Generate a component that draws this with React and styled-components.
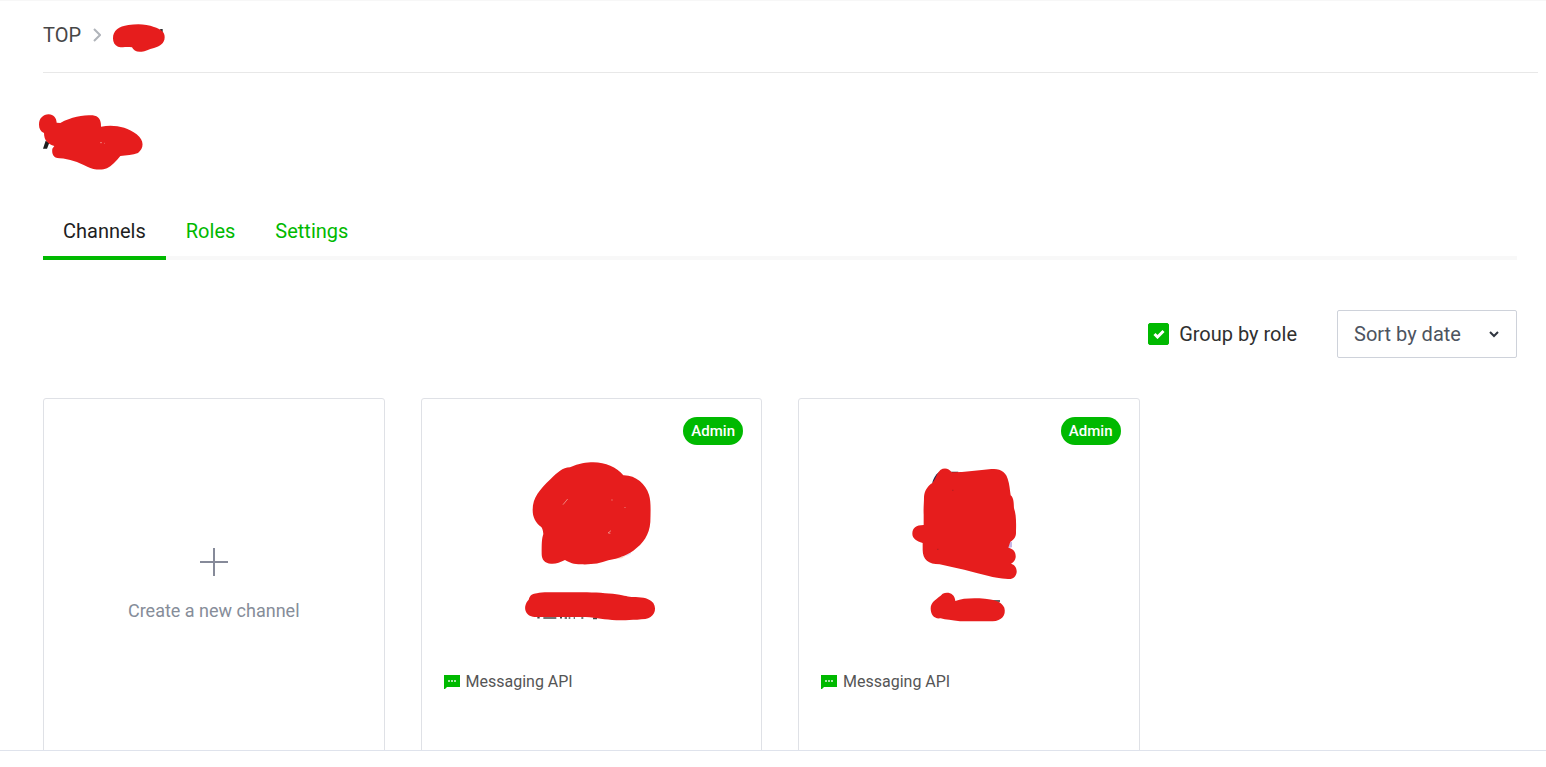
import React from "react";
import styled, { createGlobalStyle } from "styled-components";

const GREEN = "#00b900";
const RED = "#e61d1d";

const GlobalStyle = createGlobalStyle`
  *, *::before, *::after { box-sizing: border-box; }
  body {
    margin: 0;
    background: #fff;
    color: #1e1e1e;
    font-family: Roboto, "Liberation Sans", sans-serif;
    font-size: 20px;
    line-height: 24px;
  }
`;

const Page = styled.div`
  display: flex;
  flex-direction: column;
  height: 100vh;
  border-top: 1px solid #f7f7f7;
`;

const Viewport = styled.main`
  flex: 1;
  min-height: 0;
  overflow: hidden;
  padding-left: 43px;
`;

const StatusBar = styled.footer`
  height: 17px;
  flex: none;
  border-top: 1px solid #dfe3ec;
`;

const Breadcrumb = styled.nav`
  display: flex;
  align-items: center;
  gap: 12px;
  height: 72px;
  margin-right: 8px;
  padding-bottom: 4px;
  border-bottom: 1px solid #e8e8e8;
  color: #474747;
  svg { display: block; }
`;

const CrumbLink = styled.a`
  color: inherit;
  text-decoration: none;
`;

const Content = styled.div`
  padding: 41px 29px 0 0;
`;

const Title = styled.h1`
  margin: 0;
  height: 92px;
`;

const Drawing = styled.svg`
  display: block;
  flex: none;
  overflow: visible;
`;

const Tabs = styled.nav`
  display: flex;
  height: 54px;
  border-bottom: 4px solid #f8f8f8;
`;

const Tab = styled.a`
  height: 54px;
  padding: 13px 20px 0;
  border-bottom: 4px solid ${(p) => (p.$active ? GREEN : "transparent")};
  color: ${(p) => (p.$active ? "#1e1e1e" : GREEN)};
  text-decoration: none;
`;

const Toolbar = styled.div`
  display: flex;
  justify-content: flex-end;
  align-items: center;
  gap: 40px;
  margin: 50px 0 40px;
`;

const CheckLabel = styled.label`
  display: flex;
  align-items: center;
  gap: 10px;
  color: #303030;
`;

const CheckWrap = styled.span`
  display: grid;
  > * { grid-area: 1 / 1; place-self: center; }
  svg { pointer-events: none; }
`;

const Checkbox = styled.input`
  appearance: none;
  width: 21px;
  height: 22px;
  margin: 0;
  border: 1px solid ${GREEN};
  border-radius: 2px;
  &:checked { background: ${GREEN}; }
`;

const SelectWrap = styled.span`
  display: grid;
  width: 180px;
  height: 48px;
  > * { grid-area: 1 / 1; }
  svg {
    place-self: center end;
    margin-right: 17px;
    pointer-events: none;
  }
`;

const Select = styled.select`
  appearance: none;
  width: 100%;
  height: 100%;
  padding: 0 16px;
  border: 1px solid #ced2da;
  border-radius: 2px;
  background: #fff;
  color: #4d5460;
  font: inherit;
`;

const Grid = styled.div`
  display: grid;
  grid-template-columns: repeat(4, 1fr);
  gap: 36px;
`;

const Card = styled.article`
  display: flex;
  flex-direction: column;
  align-items: center;
  height: 400px;
  padding: 18px;
  border: 1px solid #dfe1e6;
  border-radius: 3px;
`;

const CreateCard = styled(Card).attrs({ as: "button", type: "button" })`
  gap: 22px;
  padding-top: 148px;
  justify-content: flex-start;
  background: #fff;
  color: #868d99;
  font: inherit;
  font-size: 18px;
`;

const Badge = styled.span`
  align-self: flex-end;
  height: 28px;
  margin-bottom: 17px;
  padding: 0 8px;
  border-radius: 14px;
  background: ${GREEN};
  color: #fff;
  font-size: 15px;
  font-weight: 500;
  line-height: 28px;
`;

const Name = styled.div`
  margin: 10px 0 46px;
`;

const ApiType = styled.div`
  display: flex;
  align-items: center;
  align-self: flex-start;
  gap: 6px;
  padding-left: 4px;
  color: #555;
  font-size: 16px;
`;

const PlusIcon = () => (
  <svg width="30" height="30" viewBox="0 0 30 30" fill="none" stroke="#868a99" strokeWidth="2" aria-hidden="true">
    <path d="M15 1v28M1 15h28" />
  </svg>
);

const MessageIcon = () => (
  <svg width="16" height="14" viewBox="0 0 16 14" aria-hidden="true">
    <path d="M0 0H16V12H3L1 14H0Z" fill={GREEN} />
    <path d="M4 5h2v2H4zM7 5h2v2H7zM10 5h2v2h-2z" fill="#a5e6a5" />
  </svg>
);

const channels = [
  {
    id: "first",
    origin: 64,
    avatar:
      "M99 210C99 172 120 149 153 117C174 97 188 83 211 82C238 70 260 67 281 67C318 68 350 81 371 106C408 105 438 133 448 164C454 184 453 210 452 246C449 285 431 310 401 332C379 347 357 354 326 361C301 371 275 374 244 373C222 373 210 368 196 360C180 368 169 372 154 371C135 370 126 359 126 342C126 310 126 298 131 282C130 272 129 267 125 261C108 249 99 232 99 210Z",
    flecks: (
      <>
        <path d="M345 353L378 347L367 355L341 357Z" fill="#f7d5c6" />
        <path d="M376 347L393 333L394 341L383 347Z" fill="#e4e4fa" />
      </>
    ),
    marks: <path d="M190 194L204 177M325 279L334 272M326 279l6 1M337 178v4M376 201v3" stroke="#f1b7ad" strokeWidth="2" fill="none" />,
    label:
      "M87 479C91 465 99 461 112 460C120 457 131 457 145 457H262C300 458 335 461 360 464C380 468 390 471 408 471C430 472 450 475 461 489C474 511 461 533 437 537C405 540 370 541 350 541C315 539 292 533 258 531H105C75 528 68 499 87 479Z",
    traces: <path d="M113 533h7M131 534h39M181 533h6M195 534h7M207 534h5M222 534h4M245 534h6M280 535h12" stroke="#454545" strokeWidth="5" />,
  },
  {
    id: "second",
    origin: 26,
    avatar:
      "M127 128C137 114 140 99 150 90C162 82 176 85 184 97C225 97 266 90 303 87C326 87 344 91 352 116C358 133 358 148 361 166C371 174 370 190 371 205C377 221 378 244 377 273C378 290 372 298 360 305L354 323C370 326 377 337 376 352C375 360 370 367 362 371C373 374 380 383 379 397C377 411 367 419 353 417C329 415 309 413 295 408C248 396 196 383 148 373C114 373 97 358 97 330V309C79 303 66 295 66 281C66 264 77 255 100 255V224C99 204 101 190 101 171C102 153 111 138 127 128Z",
    flecks: (
      <>
        <path d="M125 130C129 116 135 104 146 96L137 120Z" fill="#25284a" />
        <path d="M182 95H204L202 99L184 99Z" fill="#20242d" />
        <path d="M360 303L365 307V322L352 324Z" fill="#c6b6e5" />
      </>
    ),
    marks: <path d="M186 151h3M141 328h3" stroke="#812025" strokeWidth="2" />,
    label:
      "M121 505C121 484 141 477 157 461C172 454 193 459 195 483C218 475 242 474 284 476C315 479 334 485 342 503C348 526 334 542 307 544H209C184 541 167 539 151 535C131 538 121 524 121 505Z",
    traces: <path d="M308 483h21" stroke="#454545" strokeWidth="5" />,
  },
];

const ChannelCard = ({ channel }) => (
  <Card>
    <Badge>Admin</Badge>
    <Drawing width="140" height="118" viewBox={`${channel.origin} 66 420 354`} aria-hidden="true">
      {channel.flecks}
      <path d={channel.avatar} fill={RED} />
      {channel.marks}
    </Drawing>
    <Name>
      <Drawing width="140" height="34" viewBox={`${channel.origin} 450 420 102`} aria-hidden="true">
        {channel.traces}
        <path d={channel.label} fill={RED} />
      </Drawing>
    </Name>
    <ApiType>
      <MessageIcon />
      Messaging API
    </ApiType>
  </Card>
);

export default function App() {
  return (
    <Page>
      <GlobalStyle />
      <Viewport>
        <Breadcrumb>
          <CrumbLink href="#top">TOP</CrumbLink>
          <svg width="8" height="14" viewBox="0 0 8 14" fill="none" stroke="#b0b4ba" strokeWidth="2" aria-hidden="true">
            <path d="M1 1l6 6-6 6" />
          </svg>
          <Drawing width="52" height="28" viewBox="279 63 156 84" aria-hidden="true">
            <path d="M420 87h8v10h-5z" fill="#303030" />
            <path
              d="M279 115C279 92 296 79 325 75C350 71 379 71 402 81C422 87 435 96 434 112C434 130 419 140 402 144C386 148 376 154 365 155C350 157 340 151 336 142C317 140 308 143 294 140C284 136 279 127 279 115Z"
              fill={RED}
            />
          </Drawing>
        </Breadcrumb>
        <Content>
          <Title>
            <Drawing width="100" height="56" viewBox="69 342 300 168" aria-hidden="true">
              <path d="M77 422L88 428L81 446H69Z" fill="#1e1e1e" />
              <path
                d="M57 374C57 355 69 344 86 343C101 344 109 354 110 368L121 369C154 351 187 346 218 346C235 348 244 359 243 380C282 373 319 380 350 403C374 422 372 445 354 459C338 466 319 466 301 468C289 484 274 498 261 505C244 512 220 509 202 500C173 486 149 477 119 475C99 474 95 460 97 446L103 438C84 433 72 421 72 399C62 394 57 386 57 374Z"
                fill={RED}
              />
              <path d="M240 428h6M252 430h2" stroke="#f4aaa3" strokeWidth="2" />
            </Drawing>
          </Title>
          <Tabs>
            <Tab href="#channels" $active aria-current="page">Channels</Tab>
            <Tab href="#roles">Roles</Tab>
            <Tab href="#settings">Settings</Tab>
          </Tabs>
          <Toolbar>
            <CheckLabel>
              <CheckWrap>
                <Checkbox type="checkbox" defaultChecked />
                <svg width="12" height="10" viewBox="0 0 12 10" fill="none" stroke="#fff" strokeWidth="3" aria-hidden="true">
                  <path d="M1.500 5l3 3 6-6" />
                </svg>
              </CheckWrap>
              Group by role
            </CheckLabel>
            <SelectWrap>
              <Select aria-label="Sort channels" defaultValue="date">
                <option value="date">Sort by date</option>
              </Select>
              <svg width="12" height="8" viewBox="0 0 12 8" fill="none" stroke="#303640" strokeWidth="2" aria-hidden="true">
                <path d="M2 2l4 4 4-4" />
              </svg>
            </SelectWrap>
          </Toolbar>
          <Grid>
            <CreateCard>
              <PlusIcon />
              Create a new channel
            </CreateCard>
            {channels.map((channel) => (
              <ChannelCard key={channel.id} channel={channel} />
            ))}
          </Grid>
        </Content>
      </Viewport>
      <StatusBar />
    </Page>
  );
}
